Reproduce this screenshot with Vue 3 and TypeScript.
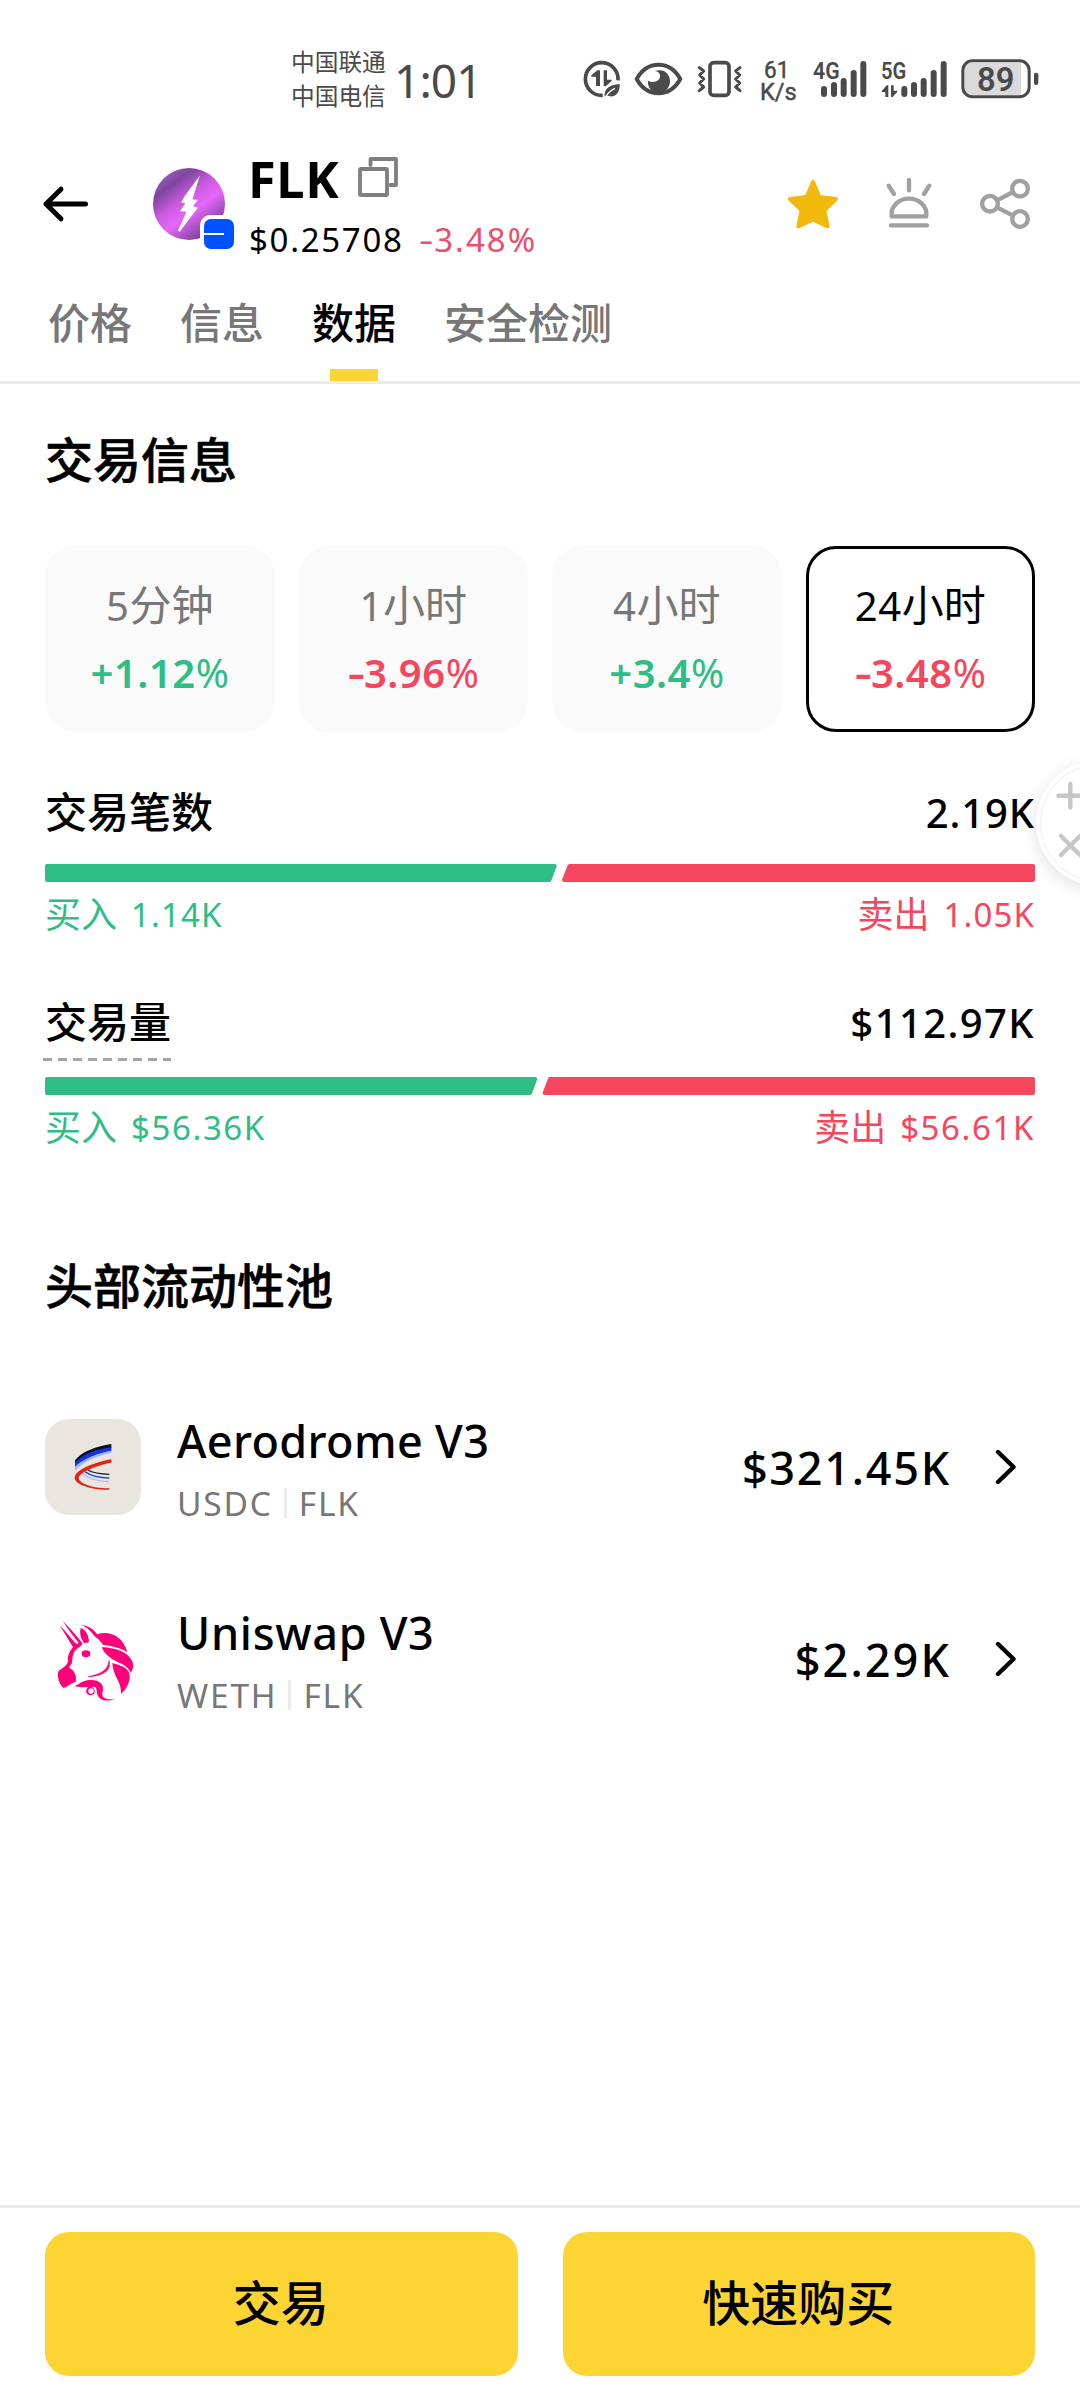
<script setup lang="ts">
interface Period { num: string; unit: string; sign: string; change: string; up: boolean; active?: boolean }
interface Metric {
  title: string; dashed: boolean; total: string; totalGap: number
  buy: string; sell: string; gap: number; split: number
}
interface Pool { name: string; nameGap: number; base: string; quote: string; amount: string; amountGap: number; icon: 'aero' | 'uni' }

const tabs: string[] = ['价格', '信息', '数据', '安全检测']
const activeTab = '数据'

const periods: Period[] = [
  { num: '5', unit: '分钟', sign: '+', change: '1.12', up: true },
  { num: '1', unit: '小时', sign: '-', change: '3.96', up: false },
  { num: '4', unit: '小时', sign: '+', change: '3.4', up: true },
  { num: '24', unit: '小时', sign: '-', change: '3.48', up: false, active: true },
]

const metrics: Metric[] = [
  { title: '交易笔数', dashed: false, total: '2.19K', totalGap: 0.9, buy: '1.14K', sell: '1.05K', gap: 1.1, split: 512.5 },
  { title: '交易量', dashed: true, total: '$112.97K', totalGap: 1.4, buy: '$56.36K', sell: '$56.61K', gap: 1.6, split: 493 },
]

const pools: Pool[] = [
  { name: 'Aerodrome V3', nameGap: 0.35, base: 'USDC', quote: 'FLK', amount: '$321.45K', amountGap: 1.75, icon: 'aero' },
  { name: 'Uniswap V3', nameGap: 0.7, base: 'WETH', quote: 'FLK', amount: '$2.29K', amountGap: 2.1, icon: 'uni' },
]

// Signal bars: [x, top] pairs on the status icon canvas
const barTops = [138, 126, 114, 90, 63]
const sim1 = [783, 813, 842, 872, 901]
const sim2 = [1024, 1053, 1082, 1112, 1142]

// Slanted halves of the buy / sell bar; the 2px stroke rounds the corners
const buyPath = (s: number) => `M2 2H${s - 2.8}L${s - 8} 16H2Z`
const sellPath = (s: number) => `M${s + 12} 2H988V16H${s + 6.6}Z`
</script>

<template>
  <div class="screen">
    <div class="status">
      <div class="carriers"><span>中国联通</span><span>中国电信</span></div>
      <div class="clock">1:01</div>
      <svg class="status-icons" viewBox="0 0 1560 240" width="520" height="80" fill="#4a4a4a">
        <path d="M174 121A49 49 0 1 0 128 166" fill="none" stroke="#4a4a4a" stroke-width="11" />
        <path d="M120 91V138H108V110H94V106L112 91ZM131 91H141V119H155V123L137 139H131Z" />
        <path d="M134 170C131 148 148 134 179 132C180 154 170 171 150 169C145 168 142 165 140 166Z" />
        <path d="M137 170C146 156 154 150 165 145" fill="none" stroke="#fff" stroke-width="4" />
        <path d="M230 117C262 60 329 60 361 117C329 174 262 174 230 117Z" fill="none" stroke="#4a4a4a" stroke-width="12" stroke-linejoin="round" />
        <path d="M285 93C312 84 330 101 330 124C330 144 315 158 296 158C276 158 262 143 264 122C279 131 302 124 300 106C299 98 293 94 285 93Z" />
        <rect x="450" y="68" width="57" height="98" rx="11" fill="none" stroke="#4a4a4a" stroke-width="11" />
        <path d="M418 83L431 93L419 105L431 117L419 129L431 141L418 152M540 83L527 93L539 105L527 117L539 129L527 141L540 152" fill="none" stroke="#4a4a4a" stroke-width="9" stroke-linecap="round" stroke-linejoin="round" />
        <text x="650" y="113" font-size="72" text-anchor="middle" textLength="76" lengthAdjust="spacingAndGlyphs" stroke="#4a4a4a" stroke-width="1.500">61</text>
        <text x="655" y="181" font-size="70" text-anchor="middle" textLength="110" lengthAdjust="spacingAndGlyphs" stroke="#4a4a4a" stroke-width="1.500">K/s</text>
        <text x="759" y="116" font-size="70" font-weight="600" textLength="80" lengthAdjust="spacingAndGlyphs">4G</text>
        <text x="963" y="116" font-size="70" font-weight="600" textLength="76" lengthAdjust="spacingAndGlyphs">5G</text>
        <rect v-for="(x, i) in sim1" :key="'a' + x" :x="x" :y="barTops[i]" width="18" :height="171 - barTops[i]" rx="9" />
        <rect v-for="(x, i) in sim2" :key="'b' + x" :x="x" :y="barTops[i]" width="18" :height="171 - barTops[i]" rx="9" />
        <path d="M985 136V171H976V156H965V153L980 136ZM993 136H1001V152H1012V155L998 171H993Z" />
        <path d="M1215 68H1383V165H1236Q1213 165 1213 142V92Q1213 68 1236 68Z" fill="#dadada" />
        <rect x="1208.500" y="62.500" width="199" height="108" rx="29" fill="none" stroke="#4a4a4a" stroke-width="9" />
        <rect x="1422" y="98" width="13" height="37" rx="6.500" />
        <text x="1307" y="152" font-size="98" font-weight="600" text-anchor="middle">89</text>
      </svg>
    </div>

    <header class="head">
      <svg class="back" viewBox="40 180 52 48" width="52" height="48">
        <path d="M46 204H85.500M61 189.200L46 204L61 218.800" fill="none" stroke="#000" stroke-width="5" stroke-linecap="round" stroke-linejoin="round" />
      </svg>
      <svg class="avatar" viewBox="150 160 90 92" width="90" height="92">
        <defs>
          <linearGradient id="coin" x1="0.150" y1="0.050" x2="0.850" y2="1">
            <stop offset="0" stop-color="#a35bc0" />
            <stop offset="0.180" stop-color="#7c469f" />
            <stop offset="0.400" stop-color="#cb5be0" />
            <stop offset="0.580" stop-color="#e866fb" />
            <stop offset="0.760" stop-color="#a452bd" />
            <stop offset="1" stop-color="#5f3580" />
          </linearGradient>
        </defs>
        <circle cx="189" cy="204" r="36" fill="url(#coin)" />
        <path d="M199.800 175.500L184.500 196.500L181 202.500L185.500 203L180 211.200L186.500 211.800L178 230.500L179.500 232L198 207.500L193 206.300L198 199.800L192.500 199.500Z" fill="#fff" />
        <rect x="200" y="215" width="44" height="44" rx="10" fill="#fff" />
        <rect x="204" y="219" width="30" height="30" rx="7" fill="#0052ff" />
        <rect x="204" y="233" width="20" height="2" fill="#fff" />
      </svg>
      <div class="token">
        <div class="symbol">
          <span>FLK</span>
          <svg viewBox="356 155 44 44" width="44" height="44" fill="none" stroke="#7f7f7f" stroke-width="3.800" stroke-linecap="round" stroke-linejoin="round">
            <path d="M370.500 165V159H396V185H390.500" />
            <rect x="360" y="169" width="27" height="26" rx="1" />
          </svg>
        </div>
        <div class="price"><span>$0.25708</span><span class="delta"><span class="minus">-</span>3.48%</span></div>
      </div>
      <svg class="actions" viewBox="0 0 960 330" width="320" height="110" fill="none" stroke="#a0a0a0" stroke-width="13" stroke-linecap="round" stroke-linejoin="round">
        <path d="M159 96L178 141L228 147L193 181L203 229L159 208L115 229L125 181L90 147L140 141Z" fill="#f0b90b" stroke="#f0b90b" stroke-width="12" />
        <path d="M386 107L402 132M447 90V121M508 107L492 132" />
        <path d="M395 199C391 168 418 146 447 146S503 168 499 199Z" />
        <path d="M393 226H501" />
        <circle cx="690" cy="161" r="23.500" />
        <circle cx="780" cy="116" r="23.500" />
        <circle cx="780" cy="207" r="23.500" />
        <path d="M711 151L759 126M711 172L759 197" />
      </svg>
    </header>

    <nav class="tabs">
      <div v-for="t in tabs" :key="t" class="tab" :class="{ on: t === activeTab }">{{ t }}</div>
    </nav>

    <main class="body">
      <h2>交易信息</h2>
      <div class="periods">
        <div v-for="p in periods" :key="p.num" class="period" :class="{ active: p.active }">
          <div class="span"><span class="n">{{ p.num }}</span>{{ p.unit }}</div>
          <div class="change" :class="p.up ? 'up' : 'down'"><span :class="{ minus: !p.up }">{{ p.sign }}</span>{{ p.change }}<span class="pct">%</span></div>
        </div>
      </div>

      <section v-for="m in metrics" :key="m.title" class="metric">
        <div class="row">
          <span class="label" :class="{ dashed: m.dashed }">{{ m.title }}</span>
          <span class="total" :style="{ letterSpacing: m.totalGap + 'px' }">{{ m.total }}</span>
        </div>
        <svg class="bar" :class="{ low: m.dashed }" viewBox="0 0 990 18" width="990" height="18" stroke-width="4" stroke-linejoin="round">
          <path :d="buyPath(m.split)" fill="#2ebd85" stroke="#2ebd85" />
          <path :d="sellPath(m.split)" fill="#f6465d" stroke="#f6465d" />
        </svg>
        <div class="sides">
          <span class="up">买入<b :style="{ letterSpacing: m.gap + 'px' }">{{ m.buy }}</b></span>
          <span class="down">卖出<b :style="{ letterSpacing: m.gap + 'px' }">{{ m.sell }}</b></span>
        </div>
      </section>

      <h2 class="pools-title">头部流动性池</h2>
      <div v-for="p in pools" :key="p.name" class="pool">
        <svg v-if="p.icon === 'aero'" viewBox="75 537 288 288" width="96" height="96">
          <rect x="75" y="537" width="288" height="288" rx="72" fill="#e9e6e0" />
          <path d="M165 661C185 634 230 619 274 612V624C230 628 185 650 165 672Z" fill="#0b0b1c" />
          <path d="M165 668C190 640 230 628 274 621V633C230 640 185 660 165 683Z" fill="#1733e0" />
          <path d="M165 680C190 655 230 642 274 632V638C230 648 190 664 165 692Z" fill="#9fb4f5" />
          <g fill="none">
            <path d="M203 690C220 699 245 702 268 703" stroke="#14142b" stroke-width="4" />
            <path d="M194 695C215 709 245 714 268 714" stroke="#2443e0" stroke-width="4" />
            <path d="M186 700C208 718 240 724 266 725" stroke="#a9bdf2" stroke-width="4" />
          </g>
          <path d="M274 658C225 666 165 690 164 713C164 732 210 750 268 749V745C215 744 176 730 176 713C178 698 225 677 274 668Z" fill="#e2231a" />
        </svg>
        <svg v-else viewBox="75 1113 288 288" width="96" height="96" fill="#ff007a">
          <path d="M128 1142C145 1160 170 1186 187 1209C187 1217 176 1222 168 1229C158 1238 157 1256 156 1270C152 1276 147 1279 148 1283C164 1291 171 1308 167 1326C152 1329 141 1342 131 1344C117 1333 111 1311 115 1294C125 1284 143 1278 144 1262C142 1246 150 1232 159 1222L120 1157C134 1171 148 1186 163 1206L171 1212L176 1209C160 1187 142 1166 128 1142Z" />
          <path d="M182 1164C197 1169 206 1184 207 1207L193 1210C182 1196 178 1180 182 1164Z" />
          <path d="M184 1155C207 1157 220 1168 232 1183C265 1171 309 1186 322 1237C303 1222 272 1218 249 1214C240 1202 236 1197 226 1191C214 1176 203 1162 184 1155Z" />
          <path d="M245 1222C288 1222 338 1240 340 1278C339 1286 336 1293 332 1298C318 1262 268 1272 245 1222Z" />
          <path d="M277 1269C303 1277 333 1284 329 1314C326 1337 315 1352 303 1361C305 1324 280 1312 277 1269Z" />
          <ellipse cx="198" cy="1241" rx="13" ry="10" />
          <path d="M267 1262C276 1290 249 1308 205 1310C237 1303 265 1293 267 1262Z" stroke="#ff007a" stroke-width="2" />
          <path d="M164 1338C180 1332 190 1318 213 1320C243 1321 255 1336 247 1358C244 1373 261 1381 283 1377C262 1387 234 1382 231 1358C230 1342 225 1338 216 1342C226 1347 229 1364 213 1366C197 1366 194 1349 205 1342C190 1340 178 1344 164 1338Z" />
          <circle cx="213" cy="1353" r="8" fill="#fff" />
        </svg>
        <div class="pair">
          <div class="name" :style="{ letterSpacing: p.nameGap + 'px' }">{{ p.name }}</div>
          <div class="tokens"><span>{{ p.base }}</span><i></i><span>{{ p.quote }}</span></div>
        </div>
        <div class="amount" :style="{ letterSpacing: p.amountGap + 'px' }">{{ p.amount }}</div>
        <svg class="chev" viewBox="0 0 22 36" width="22" height="36"><path d="M3 3L18.500 18L3 33" fill="none" stroke="#000" stroke-width="4.400" stroke-linecap="round" stroke-linejoin="round" /></svg>
      </div>
    </main>

    <footer class="foot">
      <button>交易</button>
      <button>快速购买</button>
    </footer>

    <div class="bubble">
      <svg viewBox="1041 765 39 116" width="39" height="116" fill="none" stroke="#c6c6c6" stroke-width="4.400" stroke-linecap="round">
        <path d="M1058.500 795.700H1084M1070.300 784V807.500M1061 836L1080 855M1080 836L1061 855" />
      </svg>
    </div>
  </div>
</template>

<style>
body { background: #fff; }
</style>

<style scoped>
.screen {
  position: relative;
  display: flex;
  flex-direction: column;
  width: 1080px;
  height: 2400px;
  overflow: hidden;
  background: #fff;
  color: #000;
  font-family: "Noto Sans", "Noto Sans CJK SC", sans-serif;
}
.up { color: #2ebd85; }
.down { color: #f6465d; }
.minus { display: inline-block; transform: scaleX(1.35); transform-origin: 70% 50%; }

.status { display: flex; flex: none; height: 140px; color: #4a4a4a; }
.carriers {
  display: flex;
  flex-direction: column;
  width: 103px;
  margin: 45px 0 0 291px;
  font-size: 23.700px;
  line-height: 34px;
  white-space: nowrap;
}
.clock { width: 166px; margin-top: 50px; font-size: 46px; line-height: 60px; letter-spacing: -0.900px; }
.status-icons { margin-top: 40px; font-family: Roboto, sans-serif; }

.head { display: flex; flex: none; height: 128px; }
.back { margin: 40px 0 0 40px; }
.avatar { margin: 20px 0 0 58px; }
.token { width: 512px; margin: 8.600px 0 0 8px; }
.symbol { display: flex; font-size: 50.500px; font-weight: 700; line-height: 60px; }
.symbol span { width: 108px; letter-spacing: 0.600px; }
.symbol svg { margin-top: 6.400px; }
.price { display: flex; margin-top: 11.500px; font-size: 33px; line-height: 40px; letter-spacing: 1.700px; padding-left: 1px; }
.price .delta { margin-left: 18px; color: #e9506a; letter-spacing: 2px; }
.actions { margin-top: 10px; }

.tabs { display: flex; flex: none; gap: 48px; height: 113px; padding-left: 48px; border-bottom: 3px solid #ebebeb; }
.tab { position: relative; padding-top: 30px; font-size: 42px; font-weight: 500; line-height: 50px; color: #777; }
.tab.on { color: #000; }
.tab.on::after {
  content: "";
  position: absolute;
  left: 50%;
  bottom: 0;
  width: 48px;
  height: 12px;
  margin-left: -24px;
  background: #fcd535;
}

.body { padding: 46px 45px 0; }
h2 { margin: 0; font-size: 48px; font-weight: 500; line-height: 60px; -webkit-text-stroke: 0.600px #000; }
.periods { display: grid; grid-template-columns: repeat(4, 1fr); gap: 24px; margin-top: 56px; }
.period {
  box-sizing: border-box;
  height: 186px;
  padding-top: 30.500px;
  border: 3px solid transparent;
  border-radius: 30px;
  background: #fafafa;
  text-align: center;
  line-height: 50px;
}
.period.active { border-color: #000; background: #fff; }
.span { font-size: 42px; color: #777; }
.span .n { font-size: 40px; letter-spacing: 0.500px; }
.active .span { color: #000; }
.change { margin-top: 17px; font-size: 40px; font-weight: 600; letter-spacing: 0.500px; }
.change .minus { margin-left: 3px; }
.pct { font-weight: 400; letter-spacing: 0; }

.metric { margin-top: 55px; }
.metric + .metric { margin-top: 63px; }
.row { display: flex; justify-content: space-between; line-height: 50px; }
.label { position: relative; font-size: 42px; font-weight: 500; }
.label.dashed::after {
  content: "";
  position: absolute;
  left: -2px;
  top: 60.500px;
  width: 128px;
  height: 3px;
  background: repeating-linear-gradient(90deg, #a6a6a6 0 9px, transparent 9px 15px);
}
.total { position: relative; top: 1px; font-size: 40px; font-weight: 500; }
.bar { display: block; margin-top: 27px; }
.bar.low { margin-top: 30px; }
.sides { display: flex; justify-content: space-between; margin-top: 12.500px; margin-bottom: -0.500px; font-size: 36px; line-height: 40px; }
.sides span { display: flex; }
.sides b { margin-left: 14px; font-size: 33px; font-weight: 400; }

.pools-title { margin-top: 109px; }
.pool { display: flex; align-items: center; height: 96px; margin-top: 96px; }
.pools-title + .pool { margin-top: 103px; }
.pair { flex: 1; margin: -5px 0 -7px 36px; }
.name { font-size: 45px; font-weight: 500; line-height: 56px; }
.tokens { display: flex; align-items: center; margin-top: 14px; font-size: 33.500px; line-height: 40px; letter-spacing: 1.800px; color: #777; }
.tokens i { width: 3px; height: 30px; margin: 0 12px 0 11px; background: #ebebeb; }
.amount { padding-top: 1px; font-size: 45px; font-weight: 500; line-height: 60px; }
.chev { margin: 0 18px 0 44px; }

.foot { display: flex; gap: 45px; margin-top: auto; padding: 24px 45px; border-top: 3px solid #ebebeb; }
.foot button {
  flex: 1;
  height: 144px;
  padding: 0 1px 3px 0;
  border: 0;
  border-radius: 24px;
  background: #fcd535;
  color: #000;
  font: 500 48px "Noto Sans", "Noto Sans CJK SC", sans-serif;
  line-height: 60px;
}

.bubble {
  position: absolute;
  left: 1041px;
  top: 765px;
  width: 116px;
  height: 116px;
  border-radius: 50%;
  background: #fff;
  box-shadow: 0 0 0 1px #eee, 0 0 0 5px #fff, 0 4px 16px 5px rgba(0, 0, 0, 0.12);
}
</style>
